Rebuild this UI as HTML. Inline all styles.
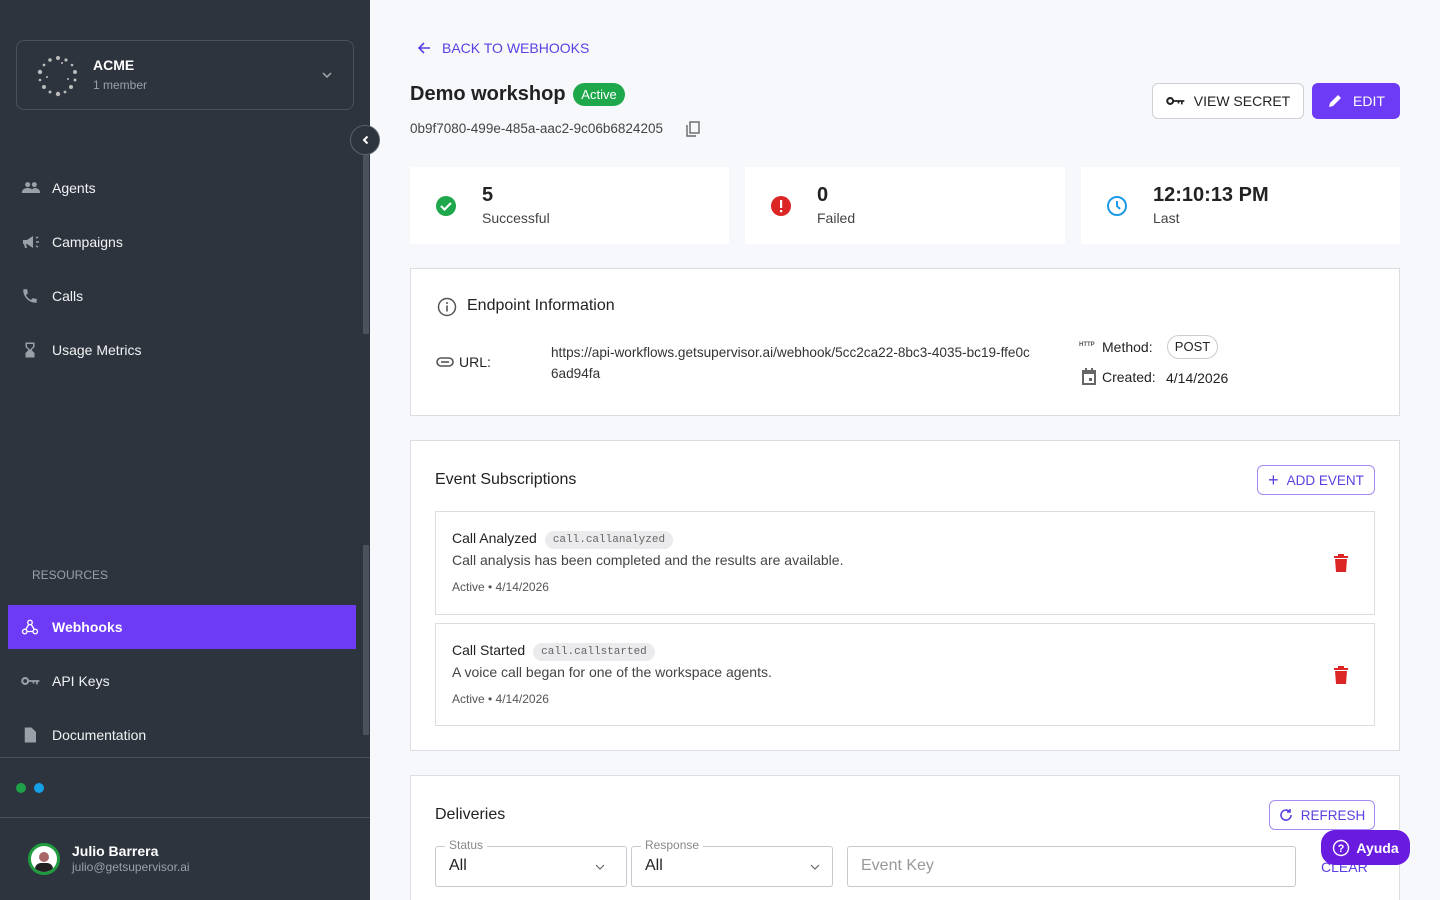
<!DOCTYPE html>
<html style="overflow:hidden;height:900px"><head><meta charset="utf-8"><style>
*{box-sizing:border-box;margin:0;padding:0}
body{width:1440px;height:900px;overflow:hidden;font-family:"Liberation Sans",sans-serif;background:#f6f8fc;position:relative;color:#222}
.sb{position:absolute;left:0;top:0;width:370px;height:900px;background:#2e343e;color:#fff}
.abs{position:absolute}
.org{left:16px;top:40px;width:338px;height:70px;border:1px solid #4a515c;border-radius:8px}
.nav{position:absolute;left:0;width:356px;height:44px;display:flex;align-items:center;font-size:14px;color:#f1f2f4}
.nav svg{position:absolute;left:21px}
.nav span{position:absolute;left:52px}
.card{position:absolute;background:#fff}
.bord{border:1px solid #dcdde2}
.btn{position:absolute;display:flex;align-items:center;justify-content:center;font-size:14px;border-radius:6px}
.sub{position:absolute;left:435px;width:940px;border:1px solid #dcdde2;background:#fff}
.code{display:inline-block;background:#ebebed;border-radius:10px;font-family:"Liberation Mono",monospace;font-size:11px;color:#666;padding:3px 8px;margin-left:8px;vertical-align:1px}
</style></head><body>
<div class="sb">
 <div class="abs org">
  <svg class="abs" style="left:20px;top:14px" width="42" height="42" viewBox="0 0 42 42"><g fill="#bbb">
  <circle cx="21" cy="3" r="2"/><circle cx="29" cy="5" r="1.6"/><circle cx="35" cy="10" r="1.3"/><circle cx="38" cy="17" r="2"/><circle cx="38" cy="25" r="1.5"/><circle cx="34" cy="32" r="2"/><circle cx="28" cy="37" r="1.4"/><circle cx="21" cy="39" r="2.2"/><circle cx="13" cy="37" r="1.5"/><circle cx="7" cy="32" r="2"/><circle cx="3" cy="25" r="1.3"/><circle cx="3" cy="17" r="2.2"/><circle cx="7" cy="10" r="1.4"/><circle cx="13" cy="5" r="1.8"/><circle cx="25" cy="8" r="1"/><circle cx="10" cy="22" r="1"/><circle cx="31" cy="24" r="1"/></g></svg>
  <div class="abs" style="left:76px;top:16px;font-size:14px;font-weight:bold">ACME</div>
  <div class="abs" style="left:76px;top:37px;font-size:12px;color:#9aa0a8">1 member</div>
  <svg class="abs" style="left:304px;top:29px" width="12" height="10" viewBox="0 0 12 10"><path d="M2 3l4 4 4-4" stroke="#aaa" stroke-width="1.5" fill="none"/></svg>
 </div>
 <div class="abs" style="left:363px;top:140px;width:6px;height:194px;background:#4b525d"></div>
 <div class="abs" style="left:363px;top:545px;width:6px;height:190px;background:#4b525d"></div>
 <div class="nav" style="top:166px"><svg width="20" height="16" viewBox="0 0 24 16"><g fill="#9aa0a8"><circle cx="8" cy="4" r="3"/><circle cx="16" cy="4" r="3"/><path d="M1 14c0-4 3-6 7-6s7 2 7 6zM12 14c0-3 1-5 4-6 4 0 7 2 7 6z"/></g></svg><span>Agents</span></div>
 <div class="nav" style="top:220px"><svg width="20" height="16" viewBox="0 0 20 16"><path d="M2 6h4l6-4v12l-6-4H5l1 4H4l-1-4H2z" fill="#9aa0a8"/><path d="M15 4l2-1M15 8h3M15 12l2 1" stroke="#9aa0a8" stroke-width="1.5"/></svg><span>Campaigns</span></div>
 <div class="nav" style="top:274px"><svg width="18" height="18" viewBox="0 0 24 24"><path d="M6.6 10.8c1.4 2.8 3.8 5.1 6.6 6.6l2.2-2.2c.3-.3.7-.4 1-.2 1.1.4 2.300.6 3.6.6.6 0 1 .4 1 1V20c0 .6-.4 1-1 1C10.6 21 3 13.4 3 4c0-.6.4-1 1-1h3.5c.6 0 1 .4 1 1 0 1.3.2 2.5.6 3.6.1.3 0 .7-.2 1z" fill="#9aa0a8"/></svg><span>Calls</span></div>
 <div class="nav" style="top:328px"><svg width="18" height="18" viewBox="0 0 24 24"><path d="M6 2h12v6l-4 4 4 4v6H6v-6l4-4-4-4zm2 2v3.5l4 4 4-4V4z" fill="#9aa0a8"/></svg><span>Usage Metrics</span></div>
 <div class="abs" style="left:32px;top:568px;font-size:12px;color:#9aa0a8">RESOURCES</div>
 <div class="nav" style="top:605px;left:8px;width:348px;background:#6d3af5;font-weight:bold;color:#fff"><svg style="left:13px" width="18" height="18" viewBox="0 0 24 24"><g stroke="#fff" stroke-width="1.8" fill="none"><circle cx="12" cy="6" r="3"/><circle cx="5" cy="18" r="3"/><circle cx="19" cy="18" r="3"/><path d="M10 9l-4 7M8 18h8M14 9l4 7"/></g></svg><span style="left:44px">Webhooks</span></div>
 <div class="nav" style="top:659px"><svg width="20" height="12" viewBox="0 0 24 12"><circle cx="5" cy="6" r="3.5" stroke="#9aa0a8" stroke-width="2.5" fill="none"/><path d="M9 5h13v2h-2v3h-2V7h-2v2h-2V7H9z" fill="#9aa0a8"/></svg><span>API Keys</span></div>
 <div class="nav" style="top:713px"><svg width="18" height="18" viewBox="0 0 24 24"><path d="M5 2h9l6 6v14H5zm3 11h9v2H8zm0 4h9v2H8z" fill="#9aa0a8"/></svg><span>Documentation</span></div>
 <div class="abs" style="left:0;top:757px;width:370px;height:1px;background:#4a515c"></div>
 <div class="abs" style="left:16px;top:783px;width:10px;height:10px;border-radius:5px;background:#1fa14a"></div>
 <div class="abs" style="left:34px;top:783px;width:10px;height:10px;border-radius:5px;background:#16a0e6"></div>
 <div class="abs" style="left:0;top:817px;width:370px;height:1px;background:#4a515c"></div>
 <div class="abs" style="left:28px;top:843px;width:32px;height:32px;border-radius:16px;background:#fff;border:3px solid #1f9c3e;overflow:hidden"><div style="margin:6px auto 0;width:10px;height:10px;border-radius:5px;background:#a66"></div><div style="margin:1px auto 0;width:18px;height:12px;border-radius:6px 6px 0 0;background:#222"></div></div>
 <div class="abs" style="left:72px;top:843px;font-size:14px;font-weight:bold">Julio Barrera</div>
 <div class="abs" style="left:72px;top:860px;font-size:12px;color:#9aa0a8">julio@getsupervisor.ai</div>
</div>
<div class="abs" style="left:350px;top:125px;width:30px;height:30px;border-radius:15px;background:#2e343e;border:1px solid #5a616c"><svg style="position:absolute;left:9px;top:8px" width="12" height="12" viewBox="0 0 12 12"><path d="M7.5 2.5L4 6l3.5 3.5" stroke="#fff" stroke-width="2" fill="none"/></svg></div>

<svg class="abs" style="left:416px;top:40px" width="16" height="16" viewBox="0 0 16 16"><path d="M14 8H3M8 3L3 8l5 5" stroke="#5b3fe0" stroke-width="1.6" fill="none"/></svg>
<div class="abs" style="left:442px;top:40px;font-size:14px;color:#5b3fe0">BACK TO WEBHOOKS</div>
<div class="abs" style="left:410px;top:83px;font-size:20px;font-weight:bold;color:#222">Demo workshop</div>
<div class="abs" style="left:573px;top:83px;width:52px;height:23px;border-radius:12px;background:#1ea84b;color:#fff;font-size:13px;text-align:center;line-height:23px">Active</div>
<div class="abs" style="left:410px;top:121px;font-size:13.5px;color:#444">0b9f7080-499e-485a-aac2-9c06b6824205</div>
<svg class="abs" style="left:686px;top:121px" width="14" height="16" viewBox="0 0 14 16"><rect x="4" y="1" width="9" height="11" stroke="#666" stroke-width="1.4" fill="none"/><path d="M1 4v11h9" stroke="#666" stroke-width="1.4" fill="none"/></svg>
<div class="btn" style="left:1152px;top:83px;width:152px;height:36px;border:1px solid #cfd0d5;background:#fff;color:#222"><svg width="20" height="12" viewBox="0 0 24 12" style="margin-right:8px"><circle cx="5" cy="6" r="3.5" stroke="#222" stroke-width="2.5" fill="none"/><path d="M9 5h13v2h-2v3h-2V7h-2v2h-2V7H9z" fill="#222"/></svg>VIEW SECRET</div>
<div class="btn" style="left:1312px;top:83px;width:88px;height:36px;background:#6d3af5;color:#fff"><svg width="16" height="16" viewBox="0 0 16 16" style="margin-right:10px"><path d="M2 14l1-4 8-8 3 3-8 8z" fill="#fff"/></svg>EDIT</div>

<div class="card" style="left:410px;top:167px;width:319px;height:77px"><svg class="abs" style="left:25px;top:28px" width="22" height="22" viewBox="0 0 22 22"><circle cx="11" cy="11" r="10" fill="#1ea84b"/><path d="M6 11l3.5 3.5L16 8" stroke="#fff" stroke-width="2.2" fill="none"/></svg><div class="abs" style="left:72px;top:17px;font-size:20px;font-weight:bold">5</div><div class="abs" style="left:72px;top:43px;font-size:14px;color:#444">Successful</div></div>
<div class="card" style="left:745px;top:167px;width:320px;height:77px"><svg class="abs" style="left:25px;top:28px" width="22" height="22" viewBox="0 0 22 22"><circle cx="11" cy="11" r="10" fill="#dc2626"/><rect x="10" y="5" width="2.2" height="8" fill="#fff"/><rect x="10" y="15" width="2.2" height="2.2" fill="#fff"/></svg><div class="abs" style="left:72px;top:17px;font-size:20px;font-weight:bold">0</div><div class="abs" style="left:72px;top:43px;font-size:14px;color:#444">Failed</div></div>
<div class="card" style="left:1081px;top:167px;width:319px;height:77px"><svg class="abs" style="left:25px;top:28px" width="22" height="22" viewBox="0 0 22 22"><circle cx="11" cy="11" r="9" stroke="#1e9be6" stroke-width="2" fill="none"/><path d="M11 6v5l3 3" stroke="#1e9be6" stroke-width="2" fill="none"/></svg><div class="abs" style="left:72px;top:17px;font-size:20px;font-weight:bold">12:10:13 PM</div><div class="abs" style="left:72px;top:43px;font-size:14px;color:#444">Last</div></div>

<div class="card bord" style="left:410px;top:268px;width:990px;height:148px">
 <svg class="abs" style="left:26px;top:28px" width="20" height="20" viewBox="0 0 20 20"><circle cx="10" cy="10" r="8.5" stroke="#555" stroke-width="1.5" fill="none"/><rect x="9.2" y="8.5" width="1.6" height="6" fill="#555"/><circle cx="10" cy="6" r="1" fill="#555"/></svg>
 <div class="abs" style="left:56px;top:28px;font-size:16px;color:#222">Endpoint Information</div>
 <svg class="abs" style="left:25px;top:87px" width="18" height="12" viewBox="0 0 18 12"><rect x="1" y="2" width="16" height="8" rx="4" stroke="#555" stroke-width="1.6" fill="none"/><path d="M5 6h8" stroke="#555" stroke-width="1.6"/></svg>
 <div class="abs" style="left:48px;top:85px;font-size:14px">URL:</div>
 <div class="abs" style="left:140px;top:73px;font-size:13.6px;line-height:21px;color:#333">https://api-workflows.getsupervisor.ai/webhook/5cc2ca22-8bc3-4035-bc19-ffe0c<br>6ad94fa</div>
 <div class="abs" style="left:668px;top:73px;font-size:6px;font-weight:bold;color:#555">HTTP</div>
 <div class="abs" style="left:691px;top:70px;font-size:14px">Method:</div>
 <div class="abs" style="left:756px;top:66px;width:51px;height:24px;border:1px solid #ccc;border-radius:12px;font-size:13px;text-align:center;line-height:22px">POST</div>
 <svg class="abs" style="left:669px;top:98px" width="18" height="20" viewBox="0 0 18 20"><rect x="2" y="3" width="14" height="15" fill="#666"/><rect x="4" y="7" width="10" height="9" fill="#fff"/><rect x="9" y="11" width="3" height="3" fill="#666"/><rect x="5" y="1" width="2" height="3" fill="#666"/><rect x="11" y="1" width="2" height="3" fill="#666"/></svg>
 <div class="abs" style="left:691px;top:100px;font-size:14px">Created:</div>
 <div class="abs" style="left:755px;top:101px;font-size:14px">4/14/2026</div>
</div>

<div class="card bord" style="left:410px;top:440px;width:990px;height:311px">
 <div class="abs" style="left:24px;top:30px;font-size:16px">Event Subscriptions</div>
 <div class="btn" style="left:846px;top:24px;width:118px;height:30px;border:1px solid #a78bf5;color:#5b3fe0;font-size:13.5px"><span style="font-size:18px;margin-right:8px;line-height:14px">+</span>ADD EVENT</div>
</div>
<div class="sub" style="top:511px;height:104px">
 <div class="abs" style="left:16px;top:18px;font-size:14px">Call Analyzed<span class="code">call.callanalyzed</span></div>
 <div class="abs" style="left:16px;top:40px;font-size:14px;color:#444">Call analysis has been completed and the results are available.</div>
 <div class="abs" style="left:16px;top:68px;font-size:12px;color:#555">Active • 4/14/2026</div>
 <svg class="abs" style="left:898px;top:42px" width="14" height="18" viewBox="0 0 14 18"><rect x="0" y="2" width="14" height="2" fill="#dc2626"/><rect x="4" y="0" width="6" height="2" fill="#dc2626"/><path d="M1 5h12l-1 13H2z" fill="#dc2626"/></svg>
</div>
<div class="sub" style="top:623px;height:103px">
 <div class="abs" style="left:16px;top:18px;font-size:14px">Call Started<span class="code">call.callstarted</span></div>
 <div class="abs" style="left:16px;top:40px;font-size:14px;color:#444">A voice call began for one of the workspace agents.</div>
 <div class="abs" style="left:16px;top:68px;font-size:12px;color:#555">Active • 4/14/2026</div>
 <svg class="abs" style="left:898px;top:42px" width="14" height="18" viewBox="0 0 14 18"><rect x="0" y="2" width="14" height="2" fill="#dc2626"/><rect x="4" y="0" width="6" height="2" fill="#dc2626"/><path d="M1 5h12l-1 13H2z" fill="#dc2626"/></svg>
</div>

<div class="card bord" style="left:410px;top:775px;width:990px;height:125px;border-bottom:none">
 <div class="abs" style="left:24px;top:30px;font-size:16px">Deliveries</div>
 <div class="btn" style="left:858px;top:24px;width:106px;height:30px;border:1px solid #a78bf5;color:#5b3fe0;font-size:13.5px"><svg width="14" height="14" viewBox="0 0 14 14" style="margin-right:8px"><path d="M12 7a5 5 0 1 1-1.5-3.5M11 1v3H8" stroke="#5b3fe0" stroke-width="1.6" fill="none"/></svg>REFRESH</div>
 <div class="abs" style="left:24px;top:70px;width:192px;height:41px;border:1px solid #c9cacf;border-radius:3px"></div>
 <div class="abs" style="left:34px;top:62px;background:#fff;padding:0 4px;font-size:12px;color:#888">Status</div>
 <div class="abs" style="left:38px;top:81px;font-size:16px">All</div>
 <svg class="abs" style="left:184px;top:87px" width="10" height="8" viewBox="0 0 10 8"><path d="M1 2l4 4 4-4" stroke="#666" stroke-width="1.2" fill="none"/></svg>
 <div class="abs" style="left:220px;top:70px;width:202px;height:41px;border:1px solid #c9cacf;border-radius:3px"></div>
 <div class="abs" style="left:230px;top:62px;background:#fff;padding:0 4px;font-size:12px;color:#888">Response</div>
 <div class="abs" style="left:234px;top:81px;font-size:16px">All</div>
 <svg class="abs" style="left:399px;top:87px" width="10" height="8" viewBox="0 0 10 8"><path d="M1 2l4 4 4-4" stroke="#666" stroke-width="1.2" fill="none"/></svg>
 <div class="abs" style="left:436px;top:70px;width:449px;height:41px;border:1px solid #c9cacf;border-radius:3px"></div>
 <div class="abs" style="left:450px;top:81px;font-size:16px;color:#999">Event Key</div>
 <div class="abs" style="left:910px;top:83px;font-size:14px;color:#5b3fe0">CLEAR</div>
</div>
<div class="btn" style="left:1321px;top:830px;width:89px;height:35px;background:#6a1be0;color:#fff;border-radius:14px;font-weight:bold"><svg width="18" height="18" viewBox="0 0 18 18" style="margin-right:6px"><circle cx="9" cy="9" r="7.5" stroke="#fff" stroke-width="1.4" fill="none"/><text x="9" y="13" font-size="11" text-anchor="middle" fill="#fff" font-family="Liberation Sans">?</text></svg>Ayuda</div>
</body></html>
